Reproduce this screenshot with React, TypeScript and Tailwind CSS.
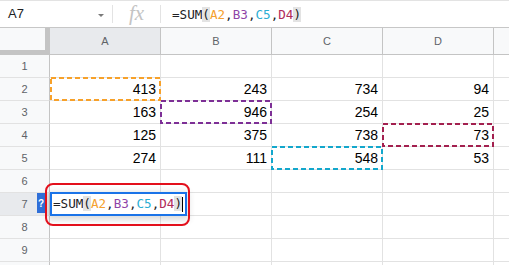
import { Fragment } from "react";

type Ref = { label: string; color: string };

const refs: Ref[] = [
  { label: "A2", color: "#f5a12e" },
  { label: "B3", color: "#8e44a8" },
  { label: "C5", color: "#2aaed3" },
  { label: "D4", color: "#b02a5a" },
];

const rows: (number | null)[][] = [
  [null, null, null, null],
  [413, 243, 734, 94],
  [163, 946, 254, 25],
  [125, 375, 738, 73],
  [274, 111, 548, 53],
  [null, null, null, null],
  [null, null, null, null],
  [null, null, null, null],
  [null, null, null, null],
];

// which cell carries a copy-style dashed marquee: "row-col" -> colour
const marquees: Record<string, string> = {
  "2-0": "#f7a12a",
  "3-1": "#7d2f96",
  "5-2": "#13a7cc",
  "4-3": "#a3204f",
};

function Formula({ caret }: { caret?: boolean }) {
  return (
    <span className="whitespace-pre font-['DejaVu_Sans_Mono',monospace] text-[12.6px] text-[#202124]">
      =SUM<span className="bg-[#e3e3e3]">(</span>
      {refs.map((r, i) => (
        <Fragment key={r.label}>
          <span style={{ color: r.color }}>{r.label}</span>
          {i < refs.length - 1 && ","}
        </Fragment>
      ))}
      <span className="bg-[#e3e3e3]">)</span>
      {caret && <span className="inline-block w-px h-[15px] bg-black align-middle" />}
    </span>
  );
}

function Marquee({ color, first }: { color: string; first: boolean }) {
  return (
    <svg
      className={`absolute top-[-1px] h-[24px] pointer-events-none z-10 ${first ? "left-0 w-[111px]" : "left-[-1px] w-[112px]"}`}
      viewBox={first ? "0 0 111 24" : "0 0 112 24"}
    >
      <rect
        x="1"
        y="1"
        width={first ? 109 : 110}
        height="22"
        fill="none"
        stroke={color}
        strokeWidth="2"
        strokeDasharray="5 3"
      />
    </svg>
  );
}

function CellEditor() {
  return (
    <>
      <div className="absolute left-[-13px] top-0 w-[8px] h-[20px] bg-[#2f6fd8] flex items-center justify-center text-[10px] font-bold text-white font-['Liberation_Sans',sans-serif] z-20">
        ?
      </div>
      <div className="absolute left-0 top-[-1px] w-[137px] h-[24px] border-2 border-[#1a73e8] bg-white shadow-[0_2px_6px_2px_rgba(60,64,67,0.18)] flex items-center pl-[1px] z-20">
        <Formula caret />
      </div>
      <div className="absolute left-[-5px] top-[-10px] w-[145px] h-[43px] border-2 border-[#e3101c] rounded-[8px] z-30 pointer-events-none" />
    </>
  );
}

export default function App() {
  return (
    <div className="w-[509px] h-[265px] overflow-hidden bg-white font-['Liberation_Sans',Arial,sans-serif]">
      {/* formula bar */}
      <div className="h-[28px] flex items-center border-t border-b border-t-[#e3e3e3] border-b-[#c7c7c7]">
        <div className="w-[112px] h-full flex items-center pl-[8px] pr-[8px] text-[13px] text-[#202124]">
          <span className="flex-1">A7</span>
          <span className="w-0 h-0 border-l-[3px] border-r-[3px] border-t-[3px] border-l-transparent border-r-transparent border-t-[#7a7a7a] mt-[2px]" />
        </div>
        <div className="w-px h-[18px] bg-[#e3e3e3]" />
        <div className="w-[47px] flex items-center justify-center font-['Liberation_Serif',serif] italic text-[21px] text-[#c4c4c4] leading-none pb-[2px]">
          fx
        </div>
        <div className="w-px h-[18px] bg-[#e3e3e3]" />
        <div className="pl-[11px] pt-[2px] flex items-center">
          <Formula />
        </div>
      </div>

      {/* column headers */}
      <div className="flex h-[27px] text-[11px] text-[#5f6368]">
        <div className="w-[50px] h-full bg-[#f8f9fa] border-r-[5px] border-b-[5px] border-[#c4c4c4]" />
        {["A", "B", "C", "D"].map((c) => (
          <div
            key={c}
            className={`w-[111px] h-full flex items-center justify-center border-r border-b border-[#c4c4c4] ${c === "A" ? "bg-[#e8eaed]" : "bg-[#f8f9fa]"}`}
          >
            {c}
          </div>
        ))}
        <div className="flex-1 h-full bg-[#f8f9fa] border-b border-[#c4c4c4]" />
      </div>

      {/* rows */}
      {rows.map((r, ri) => {
        const rowNo = ri + 1;
        return (
          <div key={rowNo} className="flex h-[23px]">
            <div
              className={`w-[50px] h-full flex items-center justify-center border-r border-b border-r-[#c4c4c4] border-b-[#e2e2e2] text-[11px] text-[#5f6368] ${rowNo === 7 ? "bg-[#e8eaed]" : "bg-[#f8f9fa]"}`}
            >
              {rowNo}
            </div>
            {r.map((v, ci) => {
              const mq = marquees[`${rowNo}-${ci}`];
              return (
                <div
                  key={ci}
                  className="relative w-[111px] h-full flex items-center justify-end pr-[4px] border-r border-b border-[#e2e2e2] text-[14px] text-black"
                >
                  {v}
                  {mq && <Marquee color={mq} first={ci === 0} />}
                  {rowNo === 7 && ci === 0 && <CellEditor />}
                </div>
              );
            })}
            <div className="flex-1 h-full border-b border-[#e2e2e2]" />
          </div>
        );
      })}

      {/* top sliver of row 10 */}
      <div className="flex h-[23px]">
        <div className="w-[50px] h-full bg-[#f8f9fa] border-r border-[#c4c4c4]" />
        {[0, 1, 2, 3].map((i) => (
          <div key={i} className="w-[111px] h-full border-r border-[#e2e2e2]" />
        ))}
      </div>
    </div>
  );
}
